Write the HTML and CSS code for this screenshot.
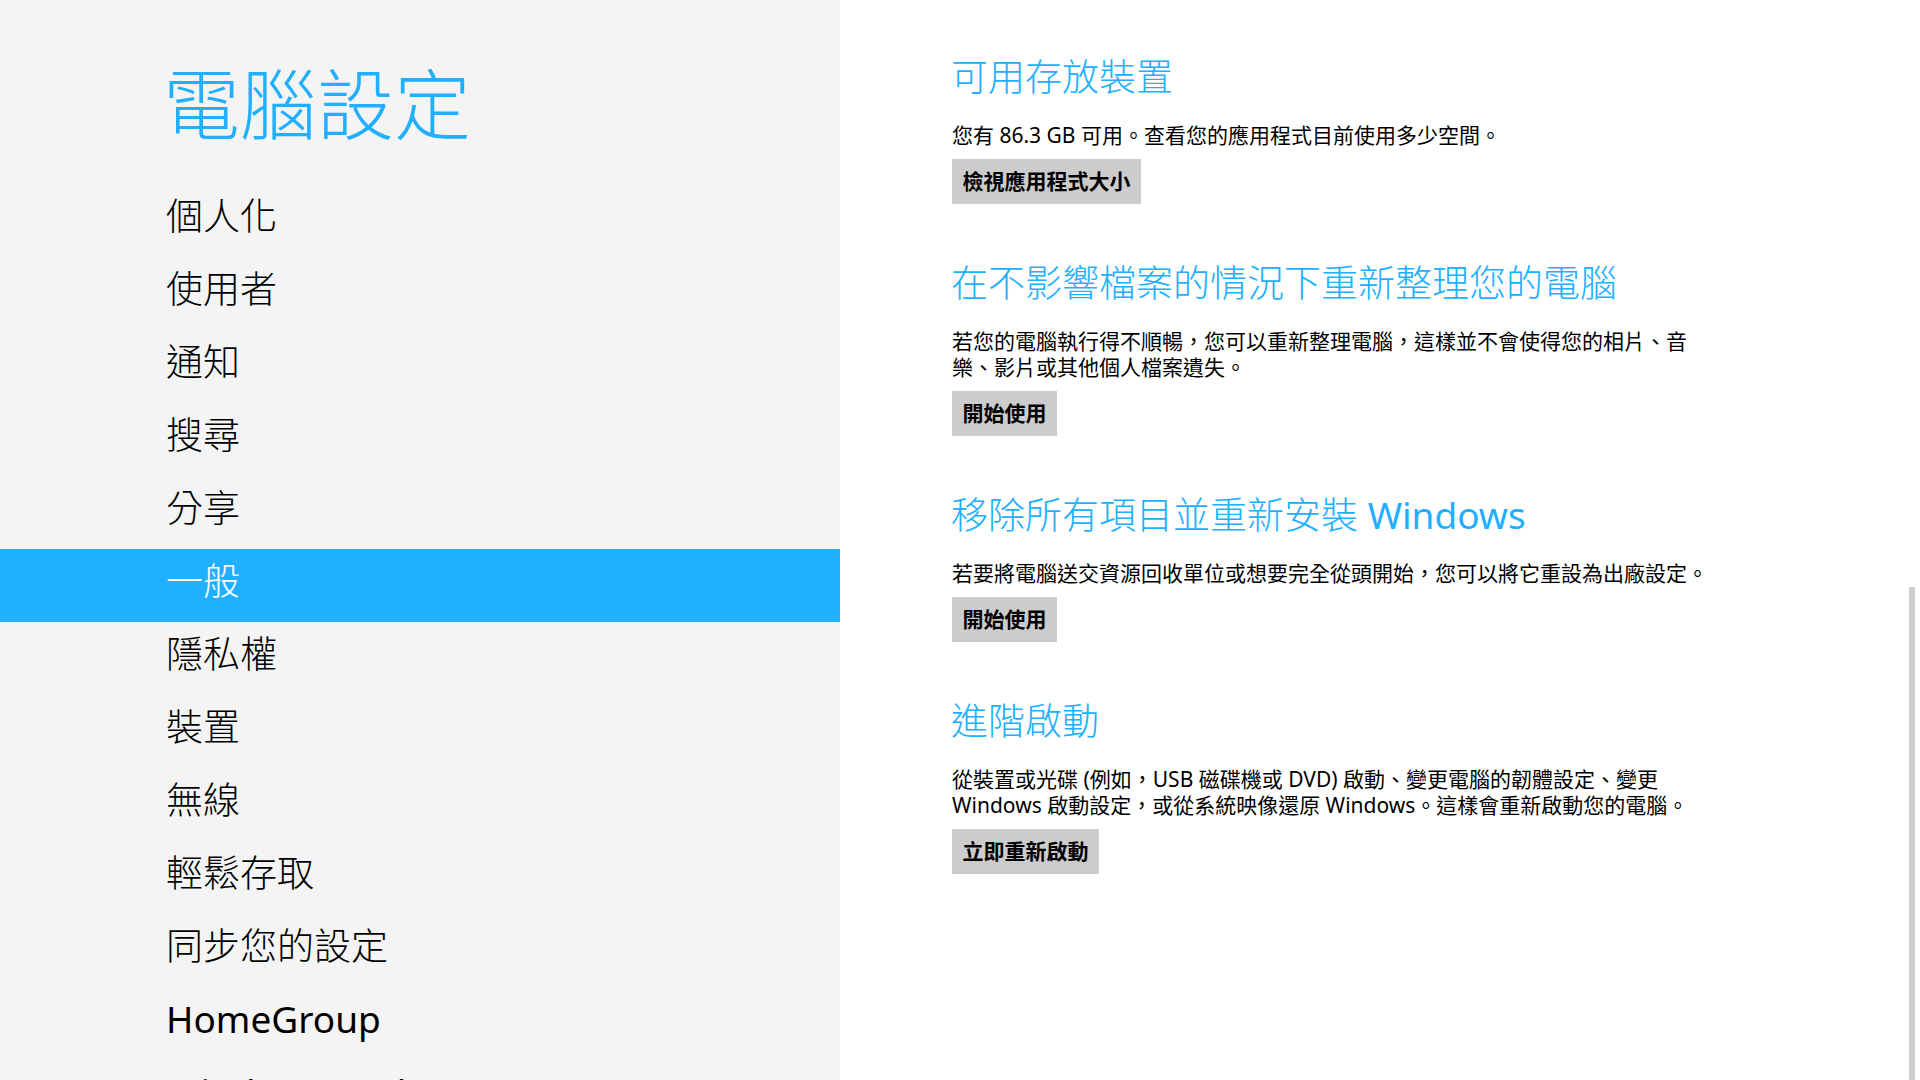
FILE: index.html
```html
<!DOCTYPE html>
<html lang="zh-Hant">
<head>
<meta charset="utf-8">
<title>電腦設定</title>
<link rel="stylesheet" href="styles.css">
</head>
<body>
<div class="app">
  <aside class="side">
    <h1 class="title">電腦設定</h1>
    <nav class="nav">
      <div class="nav-item">個人化</div>
      <div class="nav-item">使用者</div>
      <div class="nav-item">通知</div>
      <div class="nav-item">搜尋</div>
      <div class="nav-item">分享</div>
      <div class="nav-item selected">一般</div>
      <div class="nav-item">隱私權</div>
      <div class="nav-item">裝置</div>
      <div class="nav-item">無線</div>
      <div class="nav-item">輕鬆存取</div>
      <div class="nav-item">同步您的設定</div>
      <div class="nav-item"><span class="latin">HomeGroup</span></div>
      <div class="nav-item"><span class="latin">Windows Update</span></div>
    </nav>
  </aside>
  <main class="content">
    <section class="sec">
      <h2 class="sec-title">可用存放裝置</h2>
      <p class="sec-text">您有 86.3 GB 可用。查看您的應用程式目前使用多少空間。</p>
      <button class="btn">檢視應用程式大小</button>
    </section>
    <section class="sec">
      <h2 class="sec-title">在不影響檔案的情況下重新整理您的電腦</h2>
      <p class="sec-text">若您的電腦執行得不順暢，您可以重新整理電腦，這樣並不會使得您的相片、音樂、影片或其他個人檔案遺失。</p>
      <button class="btn">開始使用</button>
    </section>
    <section class="sec">
      <h2 class="sec-title">移除所有項目並重新安裝 <span class="latin">Windows</span></h2>
      <p class="sec-text">若要將電腦送交資源回收單位或想要完全從頭開始，您可以將它重設為出廠設定。</p>
      <button class="btn">開始使用</button>
    </section>
    <section class="sec">
      <h2 class="sec-title">進階啟動</h2>
      <p class="sec-text">從裝置或光碟 (例如，USB 磁碟機或 DVD) 啟動、變更電腦的韌體設定、變更 Windows 啟動設定，或從系統映像還原 Windows。這樣會重新啟動您的電腦。</p>
      <button class="btn">立即重新啟動</button>
    </section>
    <div class="scroll-thumb"></div>
  </main>
</div>
</body>
</html>
```

FILE: styles.css
```css
* { box-sizing: border-box; }
html, body {
  margin: 0;
  padding: 0;
  width: 1920px;
  height: 1080px;
  overflow: hidden;
  background: #ffffff;
  font-family: "Noto Sans", "Noto Sans CJK TC", sans-serif;
  color: #000000;
}
.app {
  display: flex;
  width: 1920px;
  height: 1080px;
}
.side {
  width: 840px;
  flex: 0 0 840px;
  height: 1080px;
  background: #f4f4f4;
  padding-top: 55px;
  overflow: hidden;
}
.title {
  margin: 0 0 29px 0;
  padding-left: 163px;
  height: 100px;
  line-height: 100px;
  font-size: 77px;
  font-weight: 300;
  color: #21afff;
  white-space: nowrap;
}
.nav {
  display: flex;
  flex-direction: column;
}
.nav-item {
  height: 73px;
  line-height: 64px;
  padding-left: 166px;
  font-size: 37px;
  font-weight: 300;
  color: #000000;
  white-space: nowrap;
}
.nav-item.selected {
  background: #21afff;
  color: #ffffff;
}
.latin {
  font-weight: 400;
}
.content {
  position: relative;
  flex: 1 1 auto;
  height: 1080px;
  margin-left: -840px;
  padding: 53px 0 0 952px;
}
.sec {
  display: flex;
  flex-direction: column;
  align-items: flex-start;
  margin-bottom: 55px;
}
.sec-title {
  margin: 0 0 0 -1px;
  height: 48px;
  line-height: 48px;
  font-size: 37px;
  font-weight: 300;
  color: #21afff;
  white-space: nowrap;
}
.sec-text {
  margin: 21px 0 11px 0;
  max-width: 770px;
  font-size: 21px;
  line-height: 26px;
  color: #000000;
}
.btn {
  height: 45px;
  padding: 0 10.5px;
  border: none;
  background: #cccccc;
  font-family: "Noto Sans", "Noto Sans CJK TC", sans-serif;
  font-size: 21px;
  font-weight: 700;
  line-height: 45px;
  color: #000000;
  cursor: pointer;
}
.scroll-thumb {
  position: absolute;
  top: 587px;
  right: 5px;
  width: 6px;
  height: 493px;
  background: #cdcdcd;
}
```
